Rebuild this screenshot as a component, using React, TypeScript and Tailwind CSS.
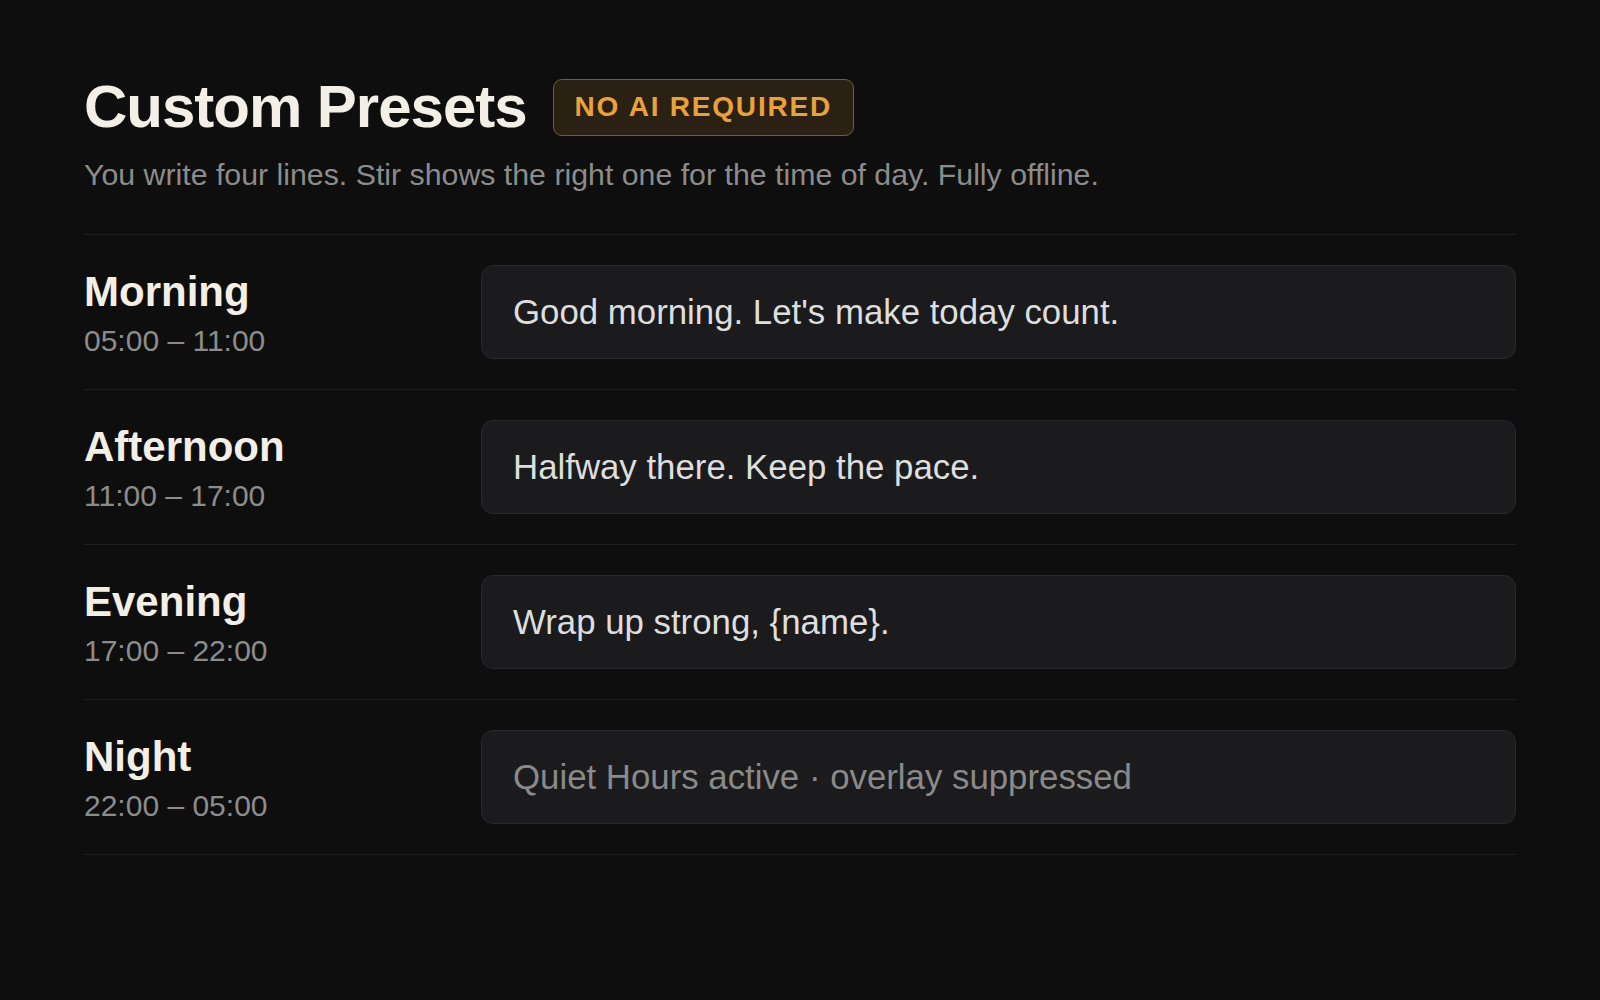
const presets = [
  { label: "Morning", range: "05:00 – 11:00", text: "Good morning. Let's make today count.", muted: false },
  { label: "Afternoon", range: "11:00 – 17:00", text: "Halfway there. Keep the pace.", muted: false },
  { label: "Evening", range: "17:00 – 22:00", text: "Wrap up strong, {name}.", muted: false },
  { label: "Night", range: "22:00 – 05:00", text: "Quiet Hours active · overlay suppressed", muted: true },
];

export default function App() {
  return (
    <div
      className="min-h-screen bg-[#0e0e0e] px-[84px] pt-[77px]"
      style={{ fontFamily: '"Liberation Sans", Arial, Helvetica, sans-serif' }}
    >
      <header>
        <div className="flex items-center gap-[26px]">
          <h1 className="text-[60px] font-bold leading-[60px] tracking-[-0.017em] text-[#f3efe6]">Custom Presets</h1>
          <span className="flex h-[57px] items-center rounded-[9px] border border-[#80592a] bg-[#2a2013] px-[21px] text-[28px] font-bold leading-none tracking-[0.064em] text-[#e9a23b]">
            NO AI REQUIRED
          </span>
        </div>
        <p className="mt-5 text-[30.3px] leading-[36px] text-[#8c8c8c]">
          You write four lines. Stir shows the right one for the time of day. Fully offline.
        </p>
      </header>

      <div className="mt-[41px] border-t border-[#1f1f1f]">
        {presets.map((p) => (
          <div className="grid grid-cols-[397px_1fr] items-start border-b border-[#1f1f1f] py-[30px]" key={p.label}>
            <div className="mt-[3px]">
              <div className="text-[42px] font-bold leading-[48px] text-[#f3efe6]">{p.label}</div>
              <div className="mt-[7px] text-[30px] leading-[36px] text-[#8c8c8c]">{p.range}</div>
            </div>
            <div className="flex h-[94px] items-center rounded-[12px] border border-[#28282a] bg-[#1b1b1d] pl-[31px]">
              <span className={p.muted ? "text-[34.8px] text-[#8a8a8a]" : "text-[34.8px] text-[#dedede]"}>{p.text}</span>
            </div>
          </div>
        ))}
      </div>
    </div>
  );
}
